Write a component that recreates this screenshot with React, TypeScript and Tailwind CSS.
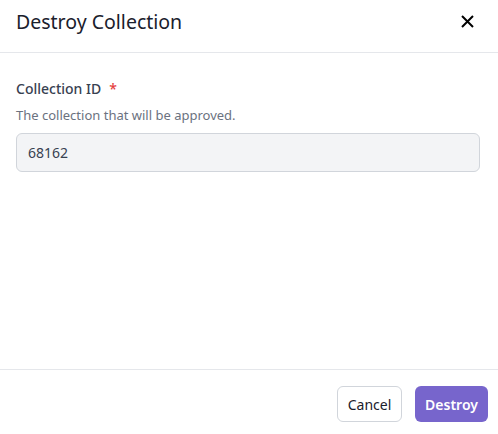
import React from "react";

export default function App() {
  return (
    <div
      className="w-[498px] h-[434px] bg-white flex flex-col text-[#111827]"
      style={{ fontFamily: '"Noto Sans", "Open Sans", sans-serif' }}
    >
      <div className="h-[53px] shrink-0 border-b border-[#e5e7eb] flex items-center justify-between pl-[16px] pr-[24px] pb-[8px]">
        <h2 className="text-[19.5px] font-normal text-[#1a202c] leading-none">Destroy Collection</h2>
        <button className="w-[14px] h-[14px] flex items-center justify-center text-black -mt-[1px]">
          <svg width="13" height="13" viewBox="0 0 13 13" fill="none" stroke="currentColor" strokeWidth="2" strokeLinecap="butt">
            <path d="M1 1L12 12M12 1L1 12" />
          </svg>
        </button>
      </div>
      <div className="flex-1 pl-[16px] pr-[18px] pt-[26px]">
        <div className="flex items-center text-[14px] font-medium text-[#374151] leading-[20px]">
          Collection ID
          <span className="ml-[8px] text-[#e53e3e]">*</span>
        </div>
        <p className="mt-[7px] text-[13px] text-[#6b7280] leading-[18px]">The collection that will be approved.</p>
        <div className="mt-[9px] h-[39px] rounded-md border border-[#d1d5db] bg-[#f3f4f6] flex items-center px-[11px] text-[14px] text-[#374151]">
          68162
        </div>
      </div>
      <div className="h-[65px] shrink-0 border-t border-[#e5e7eb] flex items-start justify-end gap-[13px] pt-[16px] pr-[10px]">
        <button className="h-[36px] w-[65px] rounded-md border border-[#d1d5db] bg-white text-[14px] font-normal text-[#1a202c]">
          Cancel
        </button>
        <button className="h-[36px] w-[73px] rounded-md bg-[#7765cc] text-[14px] font-semibold text-white">
          Destroy
        </button>
      </div>
    </div>
  );
}
